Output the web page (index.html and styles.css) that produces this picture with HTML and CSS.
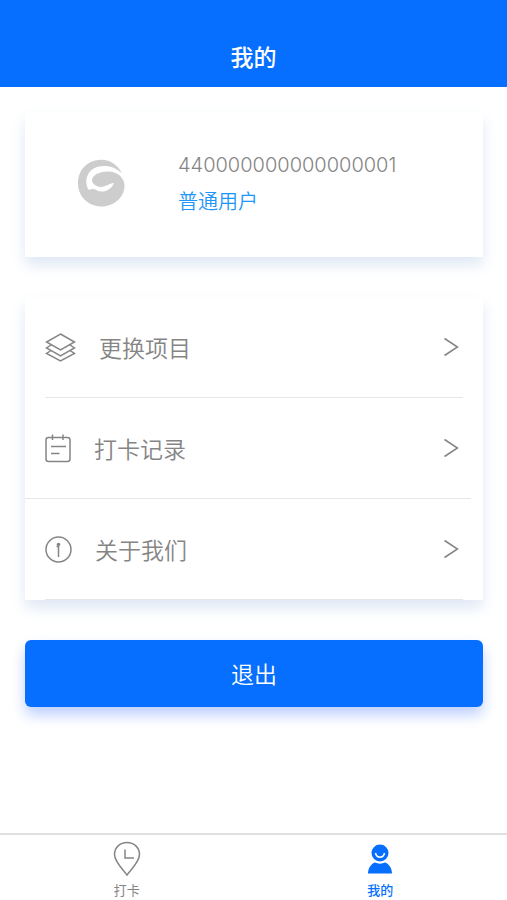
FILE: index.html
```html
<!DOCTYPE html>
<html lang="zh-CN">
<head>
<meta charset="utf-8">
<meta name="viewport" content="width=device-width, initial-scale=1">
<title>我的</title>
<link rel="stylesheet" href="styles.css">
</head>
<body>
<header class="topbar"><h1>我的</h1></header>
<main class="content">
  <section class="card profile">
    <svg class="avatar" viewBox="0 0 48 48" aria-hidden="true">
      <path fill="#cdcdcd" d="M45 14.500C40 4 30 0 22 1C9 2 1 12 1 24.500C1 38 12 47.500 24.500 47.500C37 47.500 47.500 38 47.500 27C47.500 19 41 12.500 31 12.500C21 12.500 15 17 15 21.500C15 24.500 20 28 24 28C28 28 32 24.500 37 24C34.500 30 29 33 24 32.500C20 32 18 30 16 30C14 30 12.500 31.500 11 30C7 22 10 11 20 8C29 5.500 38 7.500 45 14.500Z"/>
    </svg>
    <div class="identity">
      <p class="account">440000000000000001</p>
      <p class="role">普通用户</p>
    </div>
  </section>

  <nav class="card menu" aria-label="功能">
    <a class="row" href="#project">
      <svg width="31" height="31" viewBox="0 0 31 31" aria-hidden="true">
        <path d="M15.500 2L29.500 10L15.500 18L1.500 10ZM6 13L1.500 16L15.500 24L29.500 16L25 13M6 18.500L1.500 21.500L15.500 29L29.500 21.500L25 18.500"/>
      </svg>
      <span class="label">更换项目</span>
      <svg class="arrow" width="16" height="20" viewBox="0 0 16 20" aria-hidden="true"><path d="M1.500 1.500L14.500 10L1.500 18.500"/></svg>
    </a>
    <a class="row wide" href="#records">
      <svg width="26" height="31" viewBox="0 0 26 31" aria-hidden="true">
        <rect x="1" y="4.500" width="24" height="24" rx="2.500"/><path d="M7.500 1.500V7M18 1.500V7M6 13.500H21M6 20.500H14.500"/>
      </svg>
      <span class="label">打卡记录</span>
      <svg class="arrow" width="16" height="20" viewBox="0 0 16 20" aria-hidden="true"><path d="M1.500 1.500L14.500 10L1.500 18.500"/></svg>
    </a>
    <a class="row" href="#about">
      <svg width="27" height="31" viewBox="0 0 27 31" aria-hidden="true">
        <circle cx="13.500" cy="15.500" r="12.500"/><path d="M11.500 12.500H13.500V23"/><circle class="dot" cx="13.500" cy="10.500" r="1.800"/>
      </svg>
      <span class="label">关于我们</span>
      <svg class="arrow" width="16" height="20" viewBox="0 0 16 20" aria-hidden="true"><path d="M1.500 1.500L14.500 10L1.500 18.500"/></svg>
    </a>
  </nav>

  <button class="logout" type="button">退出</button>
</main>

<nav class="tabs" aria-label="主导航">
  <a class="tab" href="#clock">
    <svg width="28" height="36" viewBox="0 0 28 36" aria-hidden="true">
      <path d="M14 34C11 29.500 1.500 21 1.500 13.500C1.500 6.500 7 1.500 14 1.500S26.500 6.500 26.500 13.500C26.500 21 17 29.500 14 34ZM12 8.500V17H21"/>
    </svg>
    <span>打卡</span>
  </a>
  <a class="tab active" href="#me" aria-current="page">
    <svg width="28" height="36" viewBox="0 0 28 36" aria-hidden="true">
      <circle class="solid" cx="14" cy="12" r="8.500"/><path class="solid" d="M2 32.500C2 27 5.500 22.500 9 21.500C12 23 16 23 19 21.500C22.500 22.500 26 27 26 32.500Z"/><path class="smile" d="M9.500 12C10.500 17.500 17.500 17.500 18.500 12"/>
    </svg>
    <span>我的</span>
  </a>
</nav>
</body>
</html>
```
FILE: styles.css
```css
* {
  box-sizing: border-box;
}

body {
  display: flex;
  flex-direction: column;
  min-height: 100vh;
  margin: 0;
  background: #fff;
  color: #858585;
  font-family: "Noto Sans CJK SC", sans-serif;
}

h1,
p {
  margin: 0;
}

a {
  color: inherit;
  text-decoration: none;
}

svg {
  flex: none;
  fill: none;
  stroke: #858585;
  stroke-width: 1.5;
}

.topbar {
  padding: 40px 0 15px;
  background: #066fff;
  color: #fff;
  text-align: center;
}

.topbar h1 {
  font-size: 23px;
  font-weight: 500;
  line-height: 32px;
}

.content {
  display: flex;
  flex: 1;
  flex-direction: column;
  gap: 40px;
  padding: 25px 24px 40px 25px;
}

.card {
  background: #fff;
  box-shadow: 0 8px 14px #dfe8f5;
}

.profile {
  display: flex;
  align-items: center;
  gap: 53px;
  padding: 35px 52px 39px;
}

.avatar {
  width: 48px;
  height: 48px;
  stroke: none;
}

.account {
  font-family: Inter, sans-serif;
  font-size: 20px;
  font-weight: 300;
  line-height: 36px;
}

.role {
  color: #1e96fa;
  font-size: 20px;
  font-weight: 350;
  line-height: 35px;
}

.row {
  display: flex;
  align-items: center;
  gap: 23px;
  margin: 0 20px;
  height: 101px;
  border-bottom: 1px solid #e7e7e7;
}

.row.wide {
  margin: 0 12px 0 0;
  padding: 0 8px 0 20px;
}

.label {
  flex: 1;
  font-size: 23px;
  font-weight: 350;
  line-height: 32px;
}

.arrow {
  margin-right: 4px;
}

.dot {
  fill: #858585;
  stroke: none;
}

.logout {
  padding: 16px;
  border: 0;
  border-radius: 6px;
  background: #066fff;
  box-shadow: 0 8px 14px #bfd0ff;
  color: #fff;
  font: 350 23px/35px "Noto Sans CJK SC", sans-serif;
}

.tabs {
  display: flex;
  border-top: 2px solid #e0e0e0;
}

.tab {
  display: flex;
  flex: 1;
  flex-direction: column;
  align-items: center;
  padding: 6px 0 1px;
  font-size: 13px;
  line-height: 18px;
}

.tab svg {
  margin-bottom: 4px;
}

.active {
  color: #066fff;
  font-weight: 500;
}

.solid {
  fill: #066fff;
  stroke: none;
}

.smile {
  stroke: #fff;
}
```
